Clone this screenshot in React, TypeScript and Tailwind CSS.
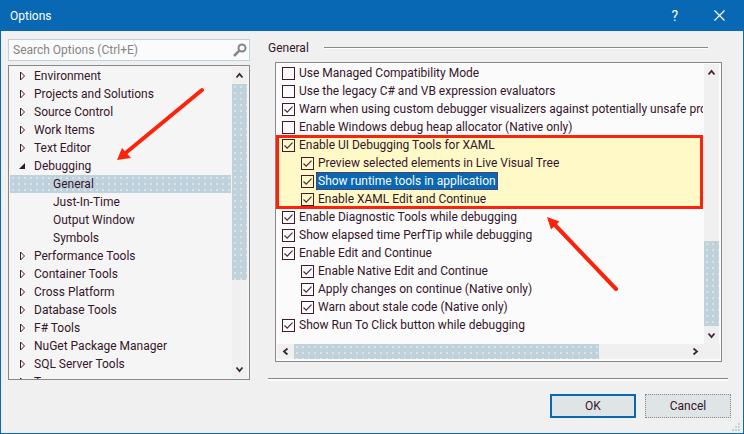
import React from "react";

type Node = { label: string; state?: "open" | "child" | "selected" };

const tree: Node[] = [
  { label: "Environment" },
  { label: "Projects and Solutions" },
  { label: "Source Control" },
  { label: "Work Items" },
  { label: "Text Editor" },
  { label: "Debugging", state: "open" },
  { label: "General", state: "selected" },
  { label: "Just-In-Time", state: "child" },
  { label: "Output Window", state: "child" },
  { label: "Symbols", state: "child" },
  { label: "Performance Tools" },
  { label: "Container Tools" },
  { label: "Cross Platform" },
  { label: "Database Tools" },
  { label: "F# Tools" },
  { label: "NuGet Package Manager" },
  { label: "SQL Server Tools" },
  { label: "T" },
];

type Option = { label: string; checked?: boolean; nested?: boolean; selected?: boolean };

const before: Option[] = [
  { label: "Use Managed Compatibility Mode" },
  { label: "Use the legacy C# and VB expression evaluators" },
  { label: "Warn when using custom debugger visualizers against potentially unsafe pro", checked: true },
  { label: "Enable Windows debug heap allocator (Native only)" },
];

const highlighted: Option[] = [
  { label: "Enable UI Debugging Tools for XAML", checked: true },
  { label: "Preview selected elements in Live Visual Tree", checked: true, nested: true },
  { label: "Show runtime tools in application", checked: true, nested: true, selected: true },
  { label: "Enable XAML Edit and Continue", checked: true, nested: true },
];

const after: Option[] = [
  { label: "Enable Diagnostic Tools while debugging", checked: true },
  { label: "Show elapsed time PerfTip while debugging", checked: true },
  { label: "Enable Edit and Continue", checked: true },
  { label: "Enable Native Edit and Continue", checked: true, nested: true },
  { label: "Apply changes on continue (Native only)", checked: true, nested: true },
  { label: "Warn about stale code (Native only)", checked: true, nested: true },
  { label: "Show Run To Click button while debugging", checked: true },
];

function Chevron({ className }: { className: string }) {
  return (
    <svg className={className} width="9" height="9" viewBox="0 0 9 9" fill="none" stroke="#402634" strokeWidth="1.8">
      <path d="M1.5 6.5 4.5 3l3 3.5" />
    </svg>
  );
}

function OptionRow({ option }: { option: Option }) {
  return (
    <label className={`flex h-[18px] items-center gap-[2px] ${option.nested ? "pl-[25px]" : "pl-1.5"}`}>
      <span className="grid size-[13px] shrink-0">
        <input
          type="checkbox"
          defaultChecked={option.checked}
          className="peer col-start-1 row-start-1 size-[13px] appearance-none border border-[#45182f]"
        />
        <svg
          className="pointer-events-none invisible col-start-1 row-start-1 peer-checked:visible"
          width="13"
          height="13"
          viewBox="0 0 13 13"
          fill="none"
          stroke="#45303c"
          strokeWidth="1.2"
        >
          <path d="m2.5 6.5 2.7 2.7 5.3-5.5" />
        </svg>
      </span>
      <span
        className={`flex h-[18px] items-center px-0.5 whitespace-nowrap ${
          option.selected ? "bg-[#0868b3] text-[#fbfbfb] outline-1 -outline-offset-1 outline-dotted outline-[#8c1c2c]" : ""
        }`}
      >
        {option.label}
      </span>
    </label>
  );
}

function TreeRow({ node }: { node: Node }) {
  const leaf = node.state === "child" || node.state === "selected";
  return (
    <li className={node.state === "selected" ? "bg-[#bfd1dd] bg-[radial-gradient(#e9eff0_0.6px,transparent_0.9px)] bg-size-[6px_6px]" : ""}>
      <button type="button" className={`flex h-[18px] w-full items-center gap-[9px] text-left ${leaf ? "pl-[43px]" : "pl-[9px]"}`}>
        {!leaf && (
          <svg width="6" height="10" viewBox="0 0 6 10" className="shrink-0 overflow-visible">
            {node.state === "open" ? (
              <path d="M6 2v6H0z" fill="#35152a" />
            ) : (
              <path d="M1.5 1v8l4-4z" fill="none" stroke="#45182f" />
            )}
          </svg>
        )}
        <span className="whitespace-nowrap">{node.label}</span>
      </button>
    </li>
  );
}

export default function App() {
  return (
    <div className="relative flex min-h-screen flex-col overflow-hidden border border-t-0 border-[#0868b3] bg-[#f0f0f0] font-[Roboto,sans-serif] text-[12px] leading-[16px] text-[#35152a]">
      <header className="flex h-[31px] items-center bg-[#0868b3] pr-[18px] pl-[9px] text-white">
        <h1 className="flex-1">Options</h1>
        <button type="button" aria-label="Help" className="mr-9 text-[14px] leading-[16px]">?</button>
        <button type="button" aria-label="Close">
          <svg width="11" height="11" viewBox="0 0 11 11" fill="none" stroke="#fff" strokeWidth="1.2">
            <path d="m.5.5 10 10m0-10-10 10" />
          </svg>
        </button>
      </header>

      <main className="flex items-start gap-[18px] pt-2 pr-[15px] pl-[7px]">
        <aside className="flex w-[242px] shrink-0 flex-col gap-1">
          <div className="flex h-[22px] items-center border border-[#bcd2de] bg-[#fbfbfb] pr-0.5 pl-1">
            <input
              type="text"
              aria-label="Search Options"
              placeholder="Search Options (Ctrl+E)"
              className="min-w-0 flex-1 outline-none placeholder:text-[#858585]"
            />
            <svg width="14" height="14" viewBox="0 0 14 14" fill="none" stroke="#85848b">
              <circle cx="9" cy="5" r="3.5" strokeWidth="2" />
              <path d="M6.3 7.7 1 13" strokeWidth="2.5" />
            </svg>
          </div>
          <nav className="flex h-[315px] overflow-hidden border border-[#8a878c] bg-[#f5f5f5] p-px">
            <ul className="min-w-0 flex-1">
              {tree.map((node) => (
                <TreeRow key={node.label} node={node} />
              ))}
            </ul>
            <div className="mr-px ml-px flex w-[15px] flex-col items-center bg-[#f0f0f0]">
              <div className="flex h-[17px] items-center">
                <Chevron className="" />
              </div>
              <div className="h-[196px] w-full bg-[#bfd1dd] bg-[radial-gradient(#f0f0d0_0.6px,transparent_0.9px)] bg-size-[6px_6px]" />
              <div className="mt-auto flex h-[17px] items-center">
                <Chevron className="rotate-180" />
              </div>
            </div>
          </nav>
        </aside>

        <section className="min-w-0 flex-1">
          <div className="flex h-[18px] items-center gap-4 pr-5">
            <h2 className="w-10">General</h2>
            <div className="h-0.5 flex-1 border-t border-[#8a878c] bg-white" />
          </div>
          <div className="mt-[5px] mr-1.5 ml-[7px] flex h-[300px] flex-col border border-[#8a878c] bg-[#fbfbfb]">
            <div className="flex min-h-0 flex-1">
              <div className="min-w-0 flex-1 pt-px">
                <div className="overflow-hidden">
                  {before.map((option) => (
                    <OptionRow key={option.label} option={option} />
                  ))}
                </div>
                <div className="relative bg-[#fff9c8]">
                  {highlighted.map((option) => (
                    <OptionRow key={option.label} option={option} />
                  ))}
                  <div className="pointer-events-none absolute -inset-y-px inset-x-0 border-3 border-[#fb230c]" />
                </div>
                {after.map((option) => (
                  <OptionRow key={option.label} option={option} />
                ))}
              </div>
              <div className="mt-px mr-0.5 ml-px flex w-[15px] flex-col items-center bg-[#f0f0f0]">
                <div className="flex h-[17px] items-center">
                  <Chevron className="" />
                </div>
                <div className="mt-auto h-[85px] w-full bg-[#bfd1dd] bg-[radial-gradient(#f0f0d0_0.6px,transparent_0.9px)] bg-size-[6px_6px]" />
                <div className="flex h-[18px] items-center">
                  <Chevron className="rotate-180" />
                </div>
              </div>
            </div>
            <div className="mx-px mb-0.5 flex h-[15px] items-center bg-[#f0f0f0] pr-5">
              <div className="flex w-[17px] justify-center">
                <Chevron className="-rotate-90" />
              </div>
              <div className="h-full w-[305px] bg-[#bfd1dd] bg-[radial-gradient(#f0f0d0_0.6px,transparent_0.9px)] bg-size-[6px_6px]" />
              <Chevron className="ml-auto rotate-90" />
            </div>
          </div>
        </section>
      </main>

      <footer className="-mt-0.5 pr-3 pb-[15px] pl-[267px]">
        <div className="mr-[3px] h-[3px] border-t border-[#8a878c] bg-[#fbfbfb]" />
        <div className="mt-[13px] flex justify-end gap-[9px]">
          <button type="button" className="h-6 w-[86px] border-2 border-[#0868b3] bg-[#dfe5e6]">OK</button>
          <button type="button" className="h-6 w-[86px] border border-dotted border-[#85858c] bg-[#dfe5e6]">Cancel</button>
        </div>
      </footer>

      {/* Resize grip */}
      <svg className="absolute right-[3px] bottom-0.5" width="8" height="8" viewBox="0 0 8 8" fill="#bfd1dd">
        <path d="M6 0h2v2H6zM3 3h2v2H3zM6 3h2v2H6zM0 6h2v2H0zM3 6h2v2H3zM6 6h2v2H6z" />
      </svg>

      {/* Annotation arrows */}
      <svg
        className="pointer-events-none absolute top-0 -left-px"
        width="744"
        height="434"
        viewBox="0 0 744 434"
        fill="#fb230c"
        stroke="#fb230c"
        strokeWidth="4"
        strokeLinecap="round"
      >
        <path d="M202 90 125 153.500M616 289 554 224" />
        <path d="m117 160 5-12 9 10zM547 217l12.500 4.500-8.500 8z" stroke="none" />
      </svg>
    </div>
  );
}
